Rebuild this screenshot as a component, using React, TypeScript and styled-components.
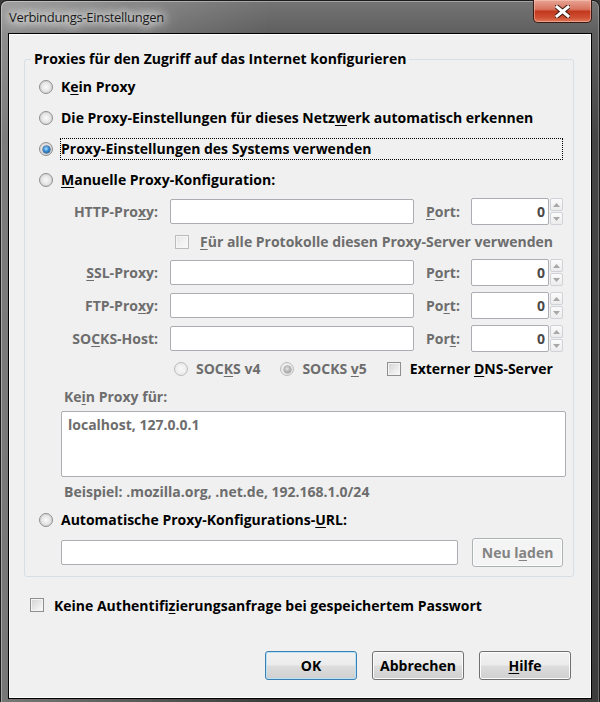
import styled, { createGlobalStyle, css } from "styled-components";

const GlobalStyle = createGlobalStyle`
  html, body { margin: 0; padding: 0; }
  body {
    width: 600px;
    height: 702px;
    overflow: hidden;
    background: #3a3a3a;
    font-family: "Open Sans", "Liberation Sans", "DejaVu Sans", sans-serif;
  }
  * { box-sizing: border-box; }
`;

const TEXT = "#000";
const GRAY = "#6d6d6d";
const SIZE = "14px";

const Window = styled.div`
  width: 600px;
  height: 702px;
  display: flex;
  flex-direction: column;
  padding: 0 7px 3px 7px;
  border: 1px solid #1c1c1c;
  border-bottom: 0;
  border-radius: 7px 7px 0 0;
  box-shadow: inset 1px 1px 0 rgba(255, 255, 255, 0.35), inset -1px 0 0 rgba(255, 255, 255, 0.25);
  background:
    linear-gradient(to right, rgba(255, 255, 255, 0.3), rgba(255, 255, 255, 0) 45%),
    linear-gradient(to bottom, #747474 0px, #5e5e5e 34px, #454545 140px, #3d3d3d 100%);
`;

const TitleBar = styled.div`
  height: 32px;
  display: flex;
  align-items: flex-start;
  justify-content: space-between;
`;

const Title = styled.span`
  padding: 7px 0 0 1px;
  font-size: 13px;
  letter-spacing: -0.3px;
  font-weight: 400;
  color: #1a1a1a;
  text-shadow:
    0 0 10px rgba(255, 255, 255, 0.95),
    0 0 10px rgba(255, 255, 255, 0.95),
    0 0 16px rgba(255, 255, 255, 0.9),
    0 0 22px rgba(255, 255, 255, 0.8);
`;

const CloseButton = styled.div`
  margin-top: -1px;
  width: 59px;
  height: 23px;
  display: flex;
  align-items: center;
  justify-content: center;
  border: 1px solid #3a1a14;
  border-top: 0;
  border-radius: 0 0 5px 5px;
  box-shadow: inset 0 0 0 1px rgba(255, 210, 200, 0.45);
  background: linear-gradient(to bottom, #e8a494 0%, #d8745f 42%, #c2391d 52%, #cf4f33 80%, #e07b5c 100%);
`;

const Client = styled.div`
  flex: 1;
  display: flex;
  flex-direction: column;
  padding: 15px 17px 0 15px;
  border: 1px solid #000;
  box-shadow: inset 0 0 0 1px #fff;
  background: #f0f0f0;
`;

const Group = styled.fieldset`
  margin: 0;
  padding: 0 10px 9px 14px;
  min-width: 0;
  border: 1px solid #d5dfe5;
  border-radius: 3px;
`;

const Legend = styled.legend`
  margin-left: -8px;
  padding: 0 3px;
  font-size: ${SIZE};
  font-weight: 700;
  line-height: 20px;
  color: ${TEXT};
`;

const Column = styled.div`
  display: flex;
  flex-direction: column;
  padding-top: 7px;
`;

const RadioRow = styled.div<{ $top?: number }>`
  display: flex;
  align-items: center;
  height: 22px;
  gap: 7px;
  margin-top: ${(p) => p.$top ?? 0}px;
`;

const Radio = styled.span<{ $checked?: boolean; $disabled?: boolean }>`
  position: relative;
  flex: none;
  width: 14px;
  height: 14px;
  border-radius: 50%;
  border: 1px solid ${(p) => (p.$disabled ? "#bcbcbc" : "#8e8f8f")};
  background: ${(p) =>
    p.$disabled
      ? "radial-gradient(circle at 50% 50%, #f7f7f7 0, #f1f1f1 45%, #dedede 100%)"
      : "radial-gradient(circle at 50% 50%, #fafafa 0, #e8e8e8 45%, #c2c2c2 100%)"};
  ${(p) =>
    p.$checked &&
    css`
      &::after {
        content: "";
        position: absolute;
        left: 2.5px;
        top: 2.5px;
        width: 7px;
        height: 7px;
        border-radius: 50%;
        background: ${p.$disabled
          ? "radial-gradient(circle at 45% 40%, #e8e8e8 0, #b8b8b8 45%, #8c8c8c 100%)"
          : "radial-gradient(circle at 45% 40%, #b4e2ff 0, #3f95da 40%, #0e4f94 85%)"};
        box-shadow: 0 0 0 0.5px ${p.$disabled ? "#8f8f8f" : "#0c3868"};
      }
    `}
`;

const OptionLabel = styled.span<{ $focused?: boolean; $disabled?: boolean; $stretch?: boolean }>`
  flex: ${(p) => (p.$stretch ? 1 : "none")};
  display: block;
  height: 22px;
  line-height: 20px;
  border: 1px ${(p) => (p.$focused ? "dotted #000" : "solid transparent")};
  font-size: ${SIZE};
  font-weight: 700;
  white-space: nowrap;
  color: ${(p) => (p.$disabled ? GRAY : TEXT)};
`;

const Key = styled.u`
  text-decoration: underline;
  text-underline-offset: 2px;
  text-decoration-thickness: 1px;
`;

const ManualGrid = styled.div`
  margin: 7px 0 0 22px;
  display: grid;
  grid-template-columns: 109px 244px 57px 92px;
  row-gap: 6px;
  align-items: center;
`;

const FieldLabel = styled.span<{ $port?: boolean }>`
  padding: ${(p) => (p.$port ? "0 0 0 12px" : "0 12px 0 0")};
  text-align: ${(p) => (p.$port ? "left" : "right")};
  font-size: ${SIZE};
  font-weight: 700;
  white-space: nowrap;
  color: ${GRAY};
`;

const fieldBox = css`
  display: block;
  margin: 0;
  height: 25px;
  border: 1px solid #abadb3;
  border-radius: 2px;
  background: #fff;
  font-family: inherit;
  font-size: ${SIZE};
  font-weight: 700;
  outline: none;
`;

const TextBox = styled.input<{ $width: number }>`
  ${fieldBox};
  width: ${(p) => p.$width}px;
  padding: 0 5px;
`;

const PortBox = styled.div`
  display: flex;
  align-items: center;
  gap: 1px;
`;

const PortInput = styled.input`
  ${fieldBox};
  width: 78px;
  height: 27px;
  padding: 0 3px;
  text-align: right;
  color: #4a4a4a;
`;

const Spinner = styled.div`
  display: flex;
  flex-direction: column;
  gap: 1px;
`;

const SpinButton = styled.div`
  width: 13px;
  height: 13px;
  display: flex;
  align-items: center;
  justify-content: center;
  border: 1px solid #cfd2d6;
  border-radius: 2px;
  background: linear-gradient(to bottom, #fbfbfb, #ececec);
`;

const SpanRow = styled.div<{ $indent: number; $gap: number }>`
  grid-column: 2 / 5;
  height: 22px;
  display: flex;
  align-items: center;
  padding-left: ${(p) => p.$indent}px;
  gap: ${(p) => p.$gap}px;
`;

const Option = styled.div<{ $gap: number }>`
  display: flex;
  align-items: center;
  gap: ${(p) => p.$gap}px;
`;

const Checkbox = styled.span<{ $disabled?: boolean }>`
  flex: none;
  width: 14px;
  height: 14px;
  border: 1px solid ${(p) => (p.$disabled ? "#bcbcbc" : "#8e8f8f")};
  box-shadow: inset 0 0 0 1px ${(p) => (p.$disabled ? "#f6f6f6" : "#f4f4f4")};
  background: ${(p) =>
    p.$disabled
      ? "linear-gradient(135deg, #e6e6e6, #fbfbfb)"
      : "linear-gradient(135deg, #d2d2d2, #fcfcfc)"};
`;

const SubLabel = styled.div<{ $top: number }>`
  margin: ${(p) => p.$top}px 0 0 25px;
  line-height: 20px;
  font-size: ${SIZE};
  font-weight: 700;
  color: ${GRAY};
`;

const NoProxyArea = styled.textarea`
  ${fieldBox};
  margin: 4px 0 0 22px;
  width: 505px;
  height: 66px;
  padding: 3px 6px;
  resize: none;
  color: ${GRAY};
`;

const UrlRow = styled.div`
  margin: 7px 0 0 22px;
  display: flex;
  align-items: center;
  gap: 14px;
`;

const PushButton = styled.div<{ $width: number; $default?: boolean; $disabled?: boolean }>`
  width: ${(p) => p.$width}px;
  height: 29px;
  display: flex;
  align-items: center;
  justify-content: center;
  border-radius: 3px;
  border: 1px solid ${(p) => (p.$default ? "#3c7fb1" : p.$disabled ? "#adb2b5" : "#707070")};
  box-shadow: inset 0 0 0 1px ${(p) => (p.$default ? "#b8e2f8" : "#fcfcfc")};
  background: ${(p) =>
    p.$disabled
      ? "#f4f4f4"
      : "linear-gradient(to bottom, #f2f2f2 0%, #ebebeb 48%, #dddddd 52%, #cfcfcf 100%)"};
  font-size: ${SIZE};
  font-weight: 700;
  white-space: pre;
  color: ${(p) => (p.$disabled ? "#838383" : TEXT)};
`;

const AuthRow = styled.div`
  margin: 18px 0 0 6px;
  height: 20px;
  display: flex;
  align-items: center;
  gap: 10px;
  font-size: ${SIZE};
  font-weight: 700;
  color: ${TEXT};
`;

const ButtonBar = styled.div`
  margin: 36px 3px 0 0;
  display: flex;
  justify-content: flex-end;
  gap: 15px;
`;

const Arrow = ({ up }: { up?: boolean }) => (
  <svg width="7" height="4" viewBox="0 0 7 4">
    <path d={up ? "M0 4 L3.5 0 L7 4 Z" : "M0 0 L3.5 4 L7 0 Z"} fill="#a8a8a8" />
  </svg>
);

const Port = () => (
  <PortBox>
    <PortInput readOnly value="0" />
    <Spinner>
      <SpinButton>
        <Arrow up />
      </SpinButton>
      <SpinButton>
        <Arrow />
      </SpinButton>
    </Spinner>
  </PortBox>
);

const proxies = [
  { label: <>HTTP-Pro<Key>x</Key>y:</>, port: <><Key>P</Key>ort:</> },
  { label: <><Key>S</Key>SL-Proxy:</>, port: <>P<Key>o</Key>rt:</> },
  { label: <>FTP-Pro<Key>x</Key>y:</>, port: <>Po<Key>r</Key>t:</> },
  { label: <>SO<Key>C</Key>KS-Host:</>, port: <>Por<Key>t</Key>:</> },
];

const ProxyRow = ({ label, port }: { label: React.ReactNode; port: React.ReactNode }) => (
  <>
    <FieldLabel>{label}</FieldLabel>
    <TextBox $width={244} readOnly />
    <FieldLabel $port>{port}</FieldLabel>
    <Port />
  </>
);

export default function App() {
  return (
    <>
      <GlobalStyle />
      <Window>
        <TitleBar>
          <Title>Verbindungs-Einstellungen</Title>
          <CloseButton>
            <svg width="15" height="13" viewBox="0 0 15 13">
              <path d="M2 2 L13 11 M13 2 L2 11" stroke="#3b1b12" strokeWidth="5" strokeLinecap="square" />
              <path d="M2 2 L13 11 M13 2 L2 11" stroke="#fff" strokeWidth="3" strokeLinecap="square" />
            </svg>
          </CloseButton>
        </TitleBar>
        <Client>
          <Group>
            <Legend>Proxies für den Zugriff auf das Internet konfigurieren</Legend>
            <Column>
              <RadioRow>
                <Radio />
                <OptionLabel $stretch>K<Key>e</Key>in Proxy</OptionLabel>
              </RadioRow>
              <RadioRow $top={9}>
                <Radio />
                <OptionLabel $stretch>
                  Die Proxy-Einstellungen für dieses Netz<Key>w</Key>erk automatisch erkennen
                </OptionLabel>
              </RadioRow>
              <RadioRow $top={9}>
                <Radio $checked />
                <OptionLabel $stretch $focused>
                  Proxy-Einstellun<Key>g</Key>en des Systems verwenden
                </OptionLabel>
              </RadioRow>
              <RadioRow $top={9}>
                <Radio />
                <OptionLabel $stretch>
                  <Key>M</Key>anuelle Proxy-Konfiguration:
                </OptionLabel>
              </RadioRow>

              <ManualGrid>
                <ProxyRow {...proxies[0]} />
                <SpanRow $indent={5} $gap={10}>
                  <Checkbox $disabled />
                  <OptionLabel $disabled>
                    <Key>F</Key>ür alle Protokolle diesen Proxy-Server verwenden
                  </OptionLabel>
                </SpanRow>
                {proxies.slice(1).map((p, i) => (
                  <ProxyRow key={i} {...p} />
                ))}
                <SpanRow $indent={4} $gap={19}>
                  <Option $gap={7}>
                    <Radio $disabled />
                    <OptionLabel $disabled>
                      SOC<Key>K</Key>S v4
                    </OptionLabel>
                  </Option>
                  <Option $gap={7}>
                    <Radio $disabled $checked />
                    <OptionLabel $disabled>
                      SOCKS <Key>v</Key>5
                    </OptionLabel>
                  </Option>
                  <Option $gap={8}>
                    <Checkbox />
                    <OptionLabel>
                      Externer <Key>D</Key>NS-Server
                    </OptionLabel>
                  </Option>
                </SpanRow>
              </ManualGrid>

              <SubLabel $top={7}>
                Ke<Key>i</Key>n Proxy für:
              </SubLabel>
              <NoProxyArea readOnly value="localhost, 127.0.0.1" />
              <SubLabel $top={5}>Beispiel: .mozilla.org, .net.de, 192.168.1.0/24</SubLabel>

              <RadioRow $top={7}>
                <Radio />
                <OptionLabel $stretch>
                  Automatische Proxy-Konfigurations-<Key>U</Key>RL:
                </OptionLabel>
              </RadioRow>
              <UrlRow>
                <TextBox $width={398} readOnly />
                <PushButton $width={91} $disabled>
                  Neu l<Key>a</Key>den
                </PushButton>
              </UrlRow>
            </Column>
          </Group>

          <AuthRow>
            <Checkbox />
            <span>
              Keine Authentifi<Key>z</Key>ierungsanfrage bei gespeichertem Passwort
            </span>
          </AuthRow>

          <ButtonBar>
            <PushButton $width={92} $default>
              OK
            </PushButton>
            <PushButton $width={92}>Abbrechen</PushButton>
            <PushButton $width={92}>
              <Key>H</Key>ilfe
            </PushButton>
          </ButtonBar>
        </Client>
      </Window>
    </>
  );
}
